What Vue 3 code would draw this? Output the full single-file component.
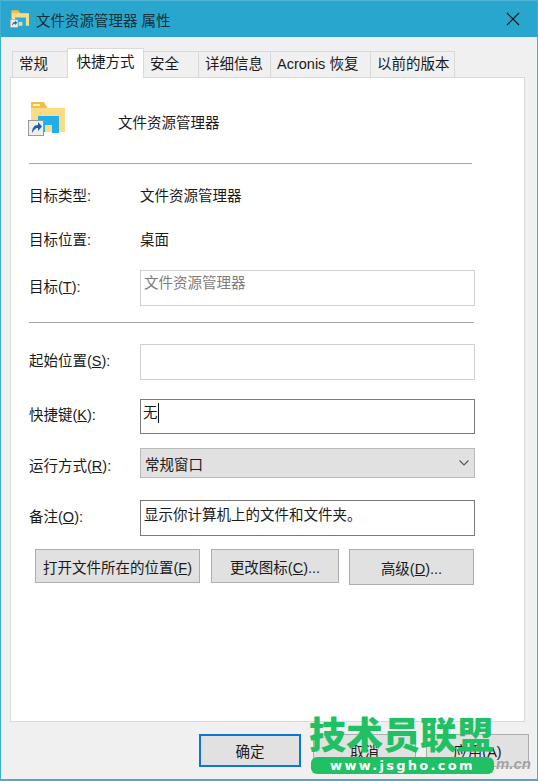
<template>
  <div class="window">
    <div class="titlebar">
      <svg class="title-icon" width="19" height="18" viewBox="0 0 37 34">
        <path d="M3 2h14l3 4h17v24H3z" fill="#fbdc85" />
        <path d="M3 0h13l3 6H3z" fill="#efbf4a" />
        <path d="M10 30V14h21v17h-7v-8h-7v7z" fill="#1fb0ec" />
        <rect x="0.500" y="18.500" width="15" height="15" fill="#eee" stroke="#999" />
        <path d="M4 31c0-5 2-8 6-8v-3l4 4.500-4 4.500v-3c-3 0-4 2-6 5z" fill="#1d5fa8" />
      </svg>
      <span class="title-text">文件资源管理器 属性</span>
      <svg class="close" width="14" height="14" viewBox="0 0 14 14">
        <path d="M1 1l12 12M13 1L1 13" stroke="#111" stroke-width="1.100" fill="none" />
      </svg>
    </div>

    <div class="body">
      <div class="tabs">
        <div
          v-for="tab in tabs"
          :key="tab.name"
          class="tab"
          :class="{ active: tab.active }"
          :style="{ width: tab.width + 'px' }"
        >
          {{ tab.name }}
        </div>
      </div>

      <div class="panel">
        <div class="head">
          <svg class="big-icon" width="37" height="34" viewBox="0 0 37 34">
            <path d="M3 2h14l3 4h17v24H3z" fill="#fbdc85" />
            <path d="M3 0h13l3 6H3z" fill="#efbf4a" />
            <rect x="5" y="2" width="7" height="2" fill="#fff3c4" />
            <path d="M10 30V14h21v17h-7v-8h-7v7z" fill="#1fb0ec" />
            <rect x="0.500" y="18.500" width="15" height="15" fill="#eee" stroke="#999" />
            <path d="M4 31c0-5 2-8 6-8v-3l4 4.500-4 4.500v-3c-3 0-4 2-6 5z" fill="#1d5fa8" />
          </svg>
          <span class="head-name">文件资源管理器</span>
        </div>
        <div class="rule first"></div>

        <div class="info type"><span class="label">目标类型:</span><span>文件资源管理器</span></div>
        <div class="info place"><span class="label">目标位置:</span><span>桌面</span></div>
        <div class="field target">
          <span class="label">目标(<u>T</u>):</span>
          <div class="box light muted">文件资源管理器</div>
        </div>
        <div class="rule second"></div>

        <div class="field start">
          <span class="label">起始位置(<u>S</u>):</span>
          <div class="box light"></div>
        </div>
        <div class="field hotkey">
          <span class="label">快捷键(<u>K</u>):</span>
          <div class="box dark key">无<i class="caret"></i></div>
        </div>
        <div class="field run">
          <span class="label plain">运行方式(<u>R</u>):</span>
          <div class="select">
            <span>常规窗口</span>
            <svg width="10" height="6" viewBox="0 0 10 6">
              <path d="M0.500 0.500l4.500 4.500 4.500-4.500" stroke="#555" stroke-width="1.100" fill="none" />
            </svg>
          </div>
        </div>
        <div class="field note">
          <span class="label">备注(<u>O</u>):</span>
          <div class="box dark memo">显示你计算机上的文件和文件夹。</div>
        </div>

        <div class="actions">
          <button class="btn open">打开文件所在的位置(<u>F</u>)</button>
          <button class="btn icon">更改图标(<u>C</u>)...</button>
          <button class="btn more">高级(<u>D</u>)...</button>
        </div>
      </div>

      <div class="footer">
        <button class="btn main">确定</button>
        <button class="btn foot">取消</button>
        <button class="btn foot">应用(A)</button>
      </div>
    </div>

    <div class="watermark">
      <div class="wm-title">技术员联盟</div>
      <div class="wm-url">www.jsgho.com</div>
    </div>
    <div class="wm-tail">m.cn</div>
  </div>
</template>

<script setup>
const tabs = [
  { name: '常规', width: 56 },
  { name: '快捷方式', width: 77, active: true },
  { name: '安全', width: 56 },
  { name: '详细信息', width: 73 },
  { name: 'Acronis 恢复', width: 101 },
  { name: '以前的版本', width: 85 }
]
</script>

<style>
html,
body {
  margin: 0;
  background: #f0f0f0;
}
</style>

<style scoped>
.window {
  position: relative;
  width: 538px;
  height: 781px;
  box-sizing: border-box;
  border: 1px solid #3fb0d4;
  border-top: none;
  border-bottom-width: 2px;
  background: #f0f0f0;
  overflow: hidden;
  font-family: "Liberation Sans", "Noto Sans CJK SC", sans-serif;
  font-size: 14.500px;
  color: #1a1a1a;
}

.titlebar {
  height: 37px;
  background: #29a6ce;
  border-top: 1px solid #4fb6d8;
  display: flex;
  align-items: center;
  padding: 0 17px 0 9px;
  box-sizing: border-box;
}

.title-icon {
  margin-right: 7px;
}

.title-text {
  flex: 1;
  color: #14303a;
}

.body {
  padding: 14px 0 0 9px;
}

.tabs {
  display: flex;
  height: 26px;
  align-items: flex-end;
  margin-left: 2px;
}

.tab {
  height: 26px;
  box-sizing: border-box;
  border: 1px solid #d9d9d9;
  border-bottom: none;
  margin-right: -1px;
  padding-left: 6px;
  line-height: 25px;
  background: #f0f0f0;
  white-space: nowrap;
}

.tab.active {
  height: 30px;
  padding-left: 0;
  text-align: center;
  background: #fff;
  position: relative;
  top: 1px;
  z-index: 1;
  line-height: 27px;
}

.panel {
  width: 515px;
  height: 645px;
  box-sizing: border-box;
  border: 1px solid #d9d9d9;
  background: #fff;
  padding: 22px 0 0 18px;
}

.head {
  display: flex;
  align-items: center;
  height: 38px;
}

.big-icon {
  margin-left: -1px;
}

.head-name {
  margin: 4px 0 0 53px;
}

.rule {
  height: 1px;
  background: #a6a6a6;
}

.rule.first {
  width: 443px;
  margin-top: 25px;
}

.rule.second {
  width: 445px;
  margin-top: 16px;
}

.info,
.field {
  display: flex;
  align-items: center;
}

.label {
  width: 111px;
  flex-shrink: 0;
}

.field .label {
  padding-bottom: 6px;
}

.field .label.plain {
  padding-bottom: 0;
  padding-top: 2px;
}

.info {
  height: 20px;
}

.info.type {
  margin-top: 20px;
}

.info.place {
  margin-top: 24px;
}

.field.target {
  margin-top: 22px;
}

.field.start {
  margin-top: 21px;
}

.field.hotkey {
  margin-top: 19px;
}

.field.run {
  margin-top: 14px;
}

.field.note {
  margin-top: 22px;
}

.box {
  width: 335px;
  height: 36px;
  box-sizing: border-box;
  padding: 2px 0 0 3px;
  line-height: 20px;
  background: #fff;
}

.box.light {
  border: 1px solid #d0d0d0;
}

.box.dark {
  border: 1px solid #7a7a7a;
}

.box.key {
  height: 35px;
  padding: 3px 0 0 2px;
}

.box.memo {
  padding-top: 4px;
}

.muted {
  color: #7d7d7d;
}

.caret {
  display: inline-block;
  width: 1px;
  height: 20px;
  background: #111;
  vertical-align: top;
}

.select {
  width: 335px;
  height: 30px;
  box-sizing: border-box;
  border: 1px solid #b9b9b9;
  background: #e1e1e1;
  display: flex;
  align-items: center;
  justify-content: space-between;
  padding: 0 5px 0 4px;
}

.btn {
  box-sizing: border-box;
  border: 1px solid #adadad;
  background: #e1e1e1;
  font: inherit;
  color: inherit;
  padding: 0;
  white-space: nowrap;
}

.actions {
  display: flex;
  align-items: flex-start;
  margin: 13px 0 0 6px;
}

.btn.open {
  width: 165px;
  height: 34px;
}

.btn.icon {
  width: 128px;
  height: 34px;
  margin-left: 11px;
}

.btn.more {
  width: 125px;
  height: 36px;
  margin-left: 10px;
}

.footer {
  display: flex;
  margin: 12px 0 0 189px;
  gap: 10px;
}

.btn.main {
  width: 102px;
  height: 33px;
  margin-right: 2px;
  border: 2px solid #0a76d8;
}

.btn.foot {
  width: 103px;
  height: 33px;
}

.watermark {
  position: absolute;
  left: 308px;
  top: 713px;
  width: 186px;
}

.wm-title {
  font-family: "Noto Sans CJK SC", sans-serif;
  font-size: 37px;
  font-weight: 900;
  line-height: 40px;
  color: #20c065;
  white-space: nowrap;
}

.wm-url {
  margin: 4px 0 0 2px;
  width: 183px;
  height: 17px;
  border-radius: 6px;
  background: #20c065;
  color: #fff;
  font-family: "DejaVu Sans", sans-serif;
  font-size: 13px;
  font-weight: 700;
  line-height: 17px;
  letter-spacing: 2.300px;
  text-align: center;
  white-space: nowrap;
}

.wm-tail {
  position: absolute;
  left: 495px;
  top: 755px;
  font-size: 15px;
  font-weight: 700;
  font-style: italic;
  color: #a0a0a0;
  text-shadow: 0 0 1px #fff;
}
</style>
